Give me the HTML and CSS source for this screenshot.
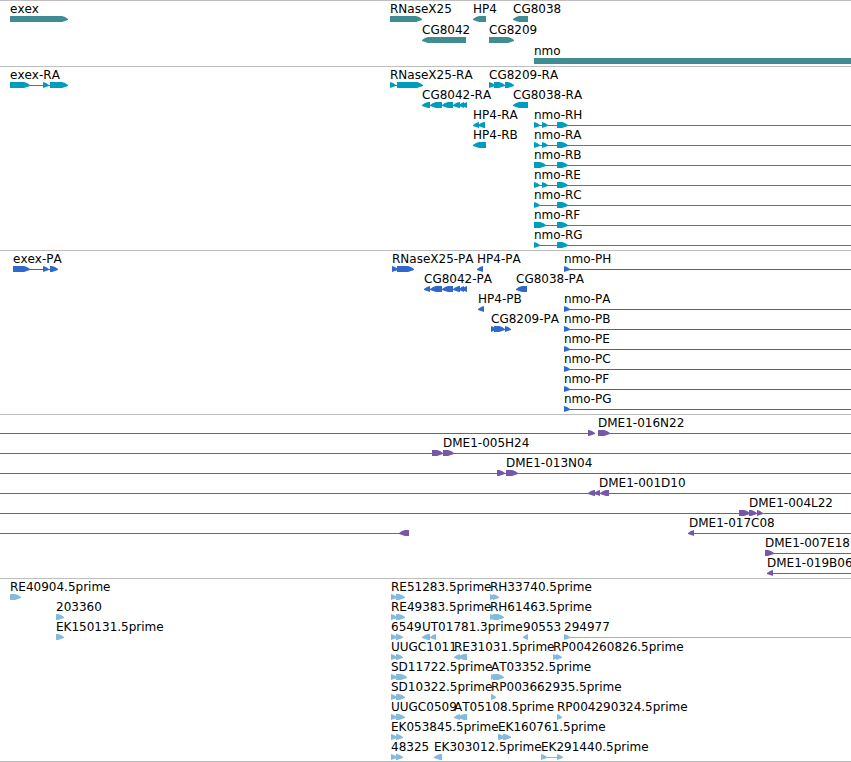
FILE: index.html
```
<!DOCTYPE html>
<html lang="en">
<head>
    <meta charset="UTF-8">
    <meta name="viewport" content="width=device-width, initial-scale=1.0">
    <title>Genome tracks</title>
    <link rel="stylesheet" href="styles.css">
</head>
<body>
    <main class="browser" id="browser">
        <section class="track track-gene" data-track="gene" aria-label="Genes"></section>
        <section class="track track-mrna" data-track="mrna" aria-label="Transcripts"></section>
        <section class="track track-cds" data-track="cds" aria-label="Coding sequences"></section>
        <section class="track track-bac" data-track="bac" aria-label="Clones"></section>
        <section class="track track-est" data-track="est" aria-label="ESTs"></section>
    </main>
    <script src="tracks.js"></script>
</body>
</html>
```

FILE: styles.css
```
* {
    margin: 0;
    padding: 0;
    box-sizing: border-box;
}

body {
    font-family: 'DejaVu Sans', sans-serif;
    font-size: 12px;
    line-height: 17px;
    font-kerning: none;
    color: #000;
    background: #fff;
}

.browser {
    overflow: hidden;
    border-bottom: 1px solid #bebebe;
}

.track {
    border-top: 1px solid #bebebe;
    padding-bottom: 3px;
}

.track-gene,
.track-est {
    padding-bottom: 2px;
}

.row {
    position: relative;
    height: 20px;
}

.track-gene .row {
    height: 21px;
}

/* labels and glyphs sit at their sequence coordinate */
.label {
    position: absolute;
    top: 0;
    white-space: nowrap;
}

.glyphs {
    position: absolute;
    top: 15px;
    left: 0;
    width: 100%;
    height: 6px;
    fill: currentColor;
}

.track-gene .glyphs {
    color: #408c92;
}

.track-mrna .glyphs {
    color: #009cbe;
}

.track-cds .glyphs {
    color: #3068cc;
}

.track-bac .glyphs {
    color: #7657a8;
}

.track-est .glyphs {
    color: #84bbdd;
}
```

FILE: tracks.js
```
const END = 'end';

// feature: [name, label x, strand, [[start, end], ...], [line start, line end]]
// strand is 1 (forward), -1 (reverse) or 0 (runs off the view)
const tracks = {
    gene: [
        [
            ['exex', 10, 1, [[10, 68]]],
            ['RNaseX25', 390, 1, [[390, 422]]],
            ['HP4', 473, -1, [[473, 486]]],
            ['CG8038', 513, -1, [[513, 528]]]
        ],
        [
            ['CG8042', 422, -1, [[422, 466]]],
            ['CG8209', 489, 1, [[489, 514]]]
        ],
        [
            ['nmo', 534, 0, [[534, END]]]
        ]
    ],
    mrna: [
        [
            ['exex-RA', 10, 1, [[10, 30], [43, 49], [50, 68]], [10, 68]],
            ['RNaseX25-RA', 390, 1, [[390, 396], [397, 423]], [390, 423]],
            ['CG8209-RA', 489, 1, [[489, 495], [494, 505], [505, 514]], [489, 514]]
        ],
        [
            ['CG8042-RA', 422, -1, [[422, 430], [430, 442], [442, 453], [453, 460], [459, 464], [462, 467]], [422, 467]],
            ['CG8038-RA', 513, -1, [[513, 528]]]
        ],
        [
            ['HP4-RA', 473, -1, [[473, 479], [478, 485]], [473, 485]],
            ['nmo-RH', 534, 1, [[534, 540], [542, 548], [557, 568]], [534, END]]
        ],
        [
            ['HP4-RB', 473, -1, [[473, 486]]],
            ['nmo-RA', 534, 1, [[534, 540], [542, 548], [557, 568]], [534, END]]
        ],
        [
            ['nmo-RB', 534, 1, [[534, 546], [557, 568]], [534, END]]
        ],
        [
            ['nmo-RE', 534, 1, [[534, 540], [542, 548], [557, 568]], [534, END]]
        ],
        [
            ['nmo-RC', 534, 1, [[534, 540], [557, 568]], [534, END]]
        ],
        [
            ['nmo-RF', 534, 1, [[534, 546], [557, 568]], [534, END]]
        ],
        [
            ['nmo-RG', 534, 1, [[534, 540], [557, 568]], [534, END]]
        ]
    ],
    cds: [
        [
            ['exex-PA', 13, 1, [[13, 30], [43, 49], [50, 58]], [13, 58]],
            ['RNaseX25-PA', 392, 1, [[392, 398], [397, 414]], [392, 414]],
            ['HP4-PA', 477, -1, [[477, 483]]],
            ['nmo-PH', 564, 1, [[564, 570]], [564, END]]
        ],
        [
            ['CG8042-PA', 424, -1, [[424, 430], [430, 442], [442, 453], [453, 460], [459, 464], [462, 467]], [424, 467]],
            ['CG8038-PA', 516, -1, [[516, 527]]]
        ],
        [
            ['HP4-PB', 478, -1, [[478, 484]]],
            ['nmo-PA', 564, 1, [[564, 570]], [564, END]]
        ],
        [
            ['CG8209-PA', 491, 1, [[491, 496], [494, 505], [505, 511]], [491, 511]],
            ['nmo-PB', 564, 1, [[564, 570]], [564, END]]
        ],
        [
            ['nmo-PE', 564, 1, [[564, 570]], [564, END]]
        ],
        [
            ['nmo-PC', 564, 1, [[564, 570]], [564, END]]
        ],
        [
            ['nmo-PF', 564, 1, [[564, 570]], [564, END]]
        ],
        [
            ['nmo-PG', 564, 1, [[564, 570]], [564, END]]
        ]
    ],
    bac: [
        [
            ['', 0, 1, [[588, 595]], [0, 595]],
            ['DME1-016N22', 598, 1, [[598, 610]], [598, END]]
        ],
        [
            ['DME1-005H24', 443, 1, [[432, 443], [443, 454]], [0, END]]
        ],
        [
            ['DME1-013N04', 506, 1, [[497, 505], [506, 518]], [0, END]]
        ],
        [
            ['DME1-001D10', 599, -1, [[588, 595], [594, 600], [600, 609]], [0, END]]
        ],
        [
            ['DME1-004L22', 749, 1, [[739, 750], [749, 757], [757, 763]], [0, END]]
        ],
        [
            ['', 0, -1, [[399, 409]], [0, 409]],
            ['DME1-017C08', 689, -1, [[688, 694]], [689, END]]
        ],
        [
            ['DME1-007E18', 765, 1, [[765, 774]], [765, END]]
        ],
        [
            ['DME1-019B06', 767, -1, [[767, 773]], [767, END]]
        ]
    ],
    est: [
        [
            ['RE40904.5prime', 10, 1, [[10, 21]]],
            ['RE51283.5prime', 391, 1, [[391, 397], [396, 405]], [391, 405]],
            ['RH33740.5prime', 490, 1, [[490, 495], [493, 499]]]
        ],
        [
            ['203360', 56, 1, [[56, 64]]],
            ['RE49383.5prime', 391, 1, [[391, 397], [396, 405]], [391, 405]],
            ['RH61463.5prime', 490, 1, [[490, 496], [493, 504]]]
        ],
        [
            ['EK150131.5prime', 56, 1, [[56, 64]]],
            ['6549', 391, 1, [[391, 397], [396, 403]], [391, 403]],
            ['UT01781.3prime', 422, -1, [[422, 430], [430, 436]], [422, 436]],
            ['90553', 523, -1, [[523, 528]]],
            ['294977', 564, 1, [[564, 570]], [564, END]]
        ],
        [
            ['UUGC1011', 391, 1, [[391, 397], [396, 403]], [391, 403]],
            ['RE31031.5prime', 454, -1, [[454, 460], [458, 467]], [454, 467]],
            ['RP004260826.5prime', 553, 1, [[553, 558], [556, 562]]]
        ],
        [
            ['SD11722.5prime', 391, 1, [[391, 397], [396, 407]], [391, 407]],
            ['AT03352.5prime', 491, 1, [[491, 495], [493, 504]]]
        ],
        [
            ['SD10322.5prime', 391, 1, [[391, 397], [396, 405]], [391, 405]],
            ['RP003662935.5prime', 491, 1, [[491, 496]]]
        ],
        [
            ['UUGC0509', 391, 1, [[391, 397], [396, 405]], [391, 405]],
            ['AT05108.5prime', 454, -1, [[454, 460], [458, 467]], [454, 467]],
            ['RP004290324.5prime', 557, 1, [[557, 562]]]
        ],
        [
            ['EK053845.5prime', 391, 1, [[391, 397], [396, 403]], [391, 403]],
            ['EK160761.5prime', 498, 1, [[498, 505], [503, 511]]]
        ],
        [
            ['48325', 391, 1, [[391, 397], [396, 403]], [391, 403]],
            ['EK303012.5prime', 434, -1, [[434, 442]]],
            ['EK291440.5prime', 541, 1, [[541, 547], [557, 563]], [541, 563]]
        ]
    ]
};

const SVG_NS = 'http://www.w3.org/2000/svg';

function svgNode(name, attrs) {
    const node = document.createElementNS(SVG_NS, name);
    for (const key in attrs) {
        node.setAttribute(key, attrs[key]);
    }
    return node;
}

function bar(start, end, y, height) {
    return svgNode('rect', {
        x: start,
        y: y,
        width: end === END ? '100%' : end - start,
        height: height
    });
}

// a block with a slightly rounded point at its downstream end
function arrow(start, end, strand) {
    const tail = strand > 0 ? start : end;
    const tip = strand > 0 ? end : start;
    const head = Math.min(6, end - start);
    const neck = tip - strand * head;
    const shoulder = tip - strand * head / 2;
    const points = [
        [tail, 0], [neck, 0], [shoulder, 1], [tip, 3],
        [tip, 4], [shoulder, 5], [neck, 6], [tail, 6]
    ];
    return svgNode('polygon', { points: points.join(' ') });
}

function renderRow(features) {
    const row = document.createElement('div');
    row.className = 'row';

    const svg = svgNode('svg', { class: 'glyphs', 'aria-hidden': 'true' });
    row.appendChild(svg);

    features.forEach(([name, x, strand, parts, line]) => {
        if (line) {
            svg.appendChild(bar(line[0], line[1], 3, 1));
        }
        parts.forEach(([start, end]) => {
            svg.appendChild(strand === 0 ? bar(start, end, 0, 6) : arrow(start, end, strand));
        });
        if (name) {
            const label = document.createElement('span');
            label.className = 'label';
            label.style.left = x + 'px';
            label.textContent = name;
            row.appendChild(label);
        }
    });

    return row;
}

document.querySelectorAll('.track').forEach((section) => {
    tracks[section.dataset.track].forEach((features) => {
        section.appendChild(renderRow(features));
    });
});
```
